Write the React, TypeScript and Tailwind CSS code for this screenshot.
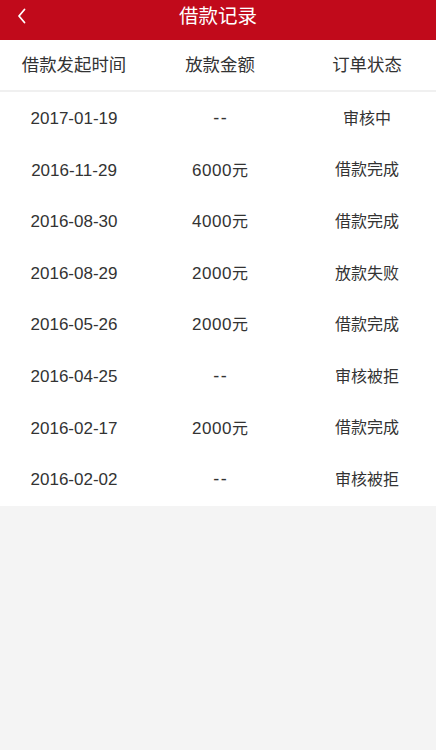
import React from "react";

const rows: [string, string, string][] = [
  ["2017-01-19", "--", "审核中"],
  ["2016-11-29", "6000", "借款完成"],
  ["2016-08-30", "4000", "借款完成"],
  ["2016-08-29", "2000", "放款失败"],
  ["2016-05-26", "2000", "借款完成"],
  ["2016-04-25", "--", "审核被拒"],
  ["2016-02-17", "2000", "借款完成"],
  ["2016-02-02", "--", "审核被拒"],
];

export default function App() {
  return (
    <div
      className="min-h-[750px] bg-[#f4f4f4] text-[#333]"
      style={{ fontFamily: '"Liberation Sans", "Noto Sans CJK SC", sans-serif' }}
    >
      <div className="relative h-[40px] bg-[#c10a1b] flex items-center justify-center">
        <svg
          className="absolute left-[16px] top-[8px]"
          width="12"
          height="16"
          viewBox="0 0 12 16"
          fill="none"
          stroke="white"
          strokeWidth="1.8"
          strokeLinecap="round"
          strokeLinejoin="round"
        >
          <path d="M8.5 1.5 L3 8 L8.5 14.5" />
        </svg>
        <span className="text-white text-[19.5px] leading-none -mt-[6px]">借款记录</span>
      </div>
      <div className="bg-white grid grid-cols-[148px_144px_1fr] h-[52px] items-center text-[17.4px] border-b-2 border-[#f0f0f0]">
        <div className="text-center">借款发起时间</div>
        <div className="text-center">放款金额</div>
        <div className="text-center pl-[6px]">订单状态</div>
      </div>
      <div className="bg-white pt-[1px]">
        {rows.map((r, i) => (
          <div
            key={i}
            className="grid grid-cols-[148px_144px_1fr] h-[51.6px] items-center text-[16px]"
          >
            <div className="text-center text-[17px]">{r[0]}</div>
            <div className="text-center">
              {r[1] === "--" ? (
                <span className="text-[18px] tracking-[1.5px] pl-[1.5px]">--</span>
              ) : (
                <>
                  <span className="text-[17px] tracking-[0.5px]">{r[1]}</span>
                  <span>元</span>
                </>
              )}
            </div>
            <div className="text-center pl-[6px]">{r[2]}</div>
          </div>
        ))}
      </div>
    </div>
  );
}
